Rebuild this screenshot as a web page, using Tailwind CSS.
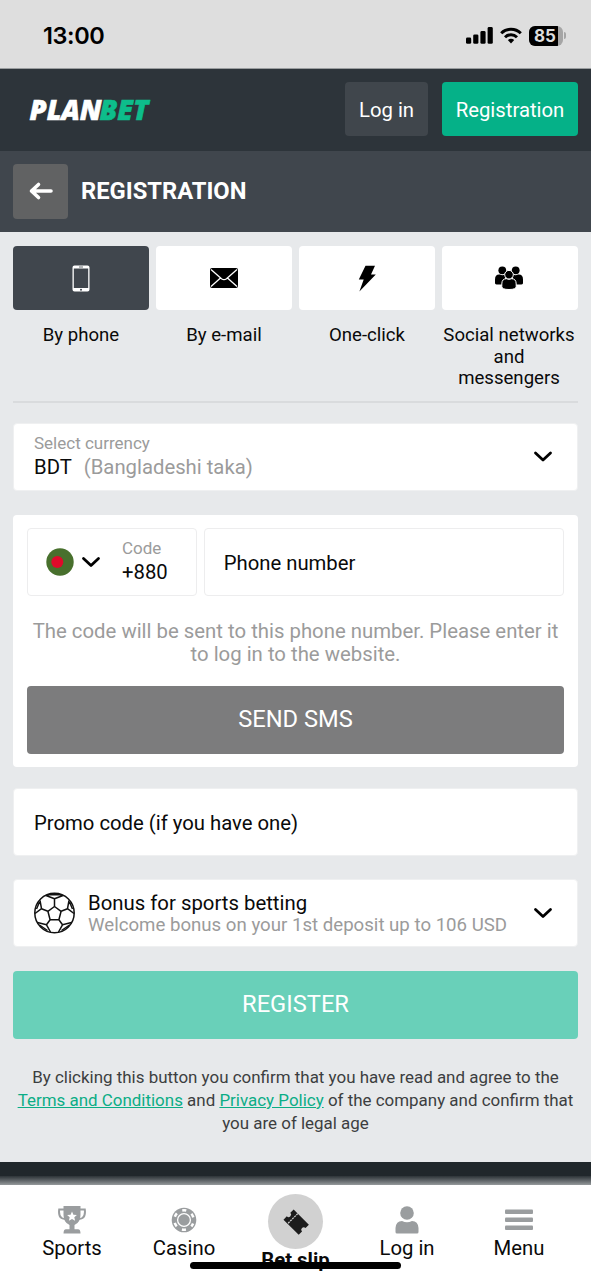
<!DOCTYPE html>
<html lang="en">
<head>
<meta charset="utf-8">
<title>Registration</title>
<script src="https://cdn.jsdelivr.net/npm/@tailwindcss/browser@4"></script>
</head>
<body class="h-[1280px] w-[591px] overflow-hidden bg-[#e7e9eb] font-['Roboto',sans-serif] text-[#0a0a0a]">
<div class="relative flex h-[1280px] flex-col overflow-hidden">
  <!-- Status bar -->
  <div class="flex h-[69px] shrink-0 items-start justify-between border-b border-[#9a9d9f] bg-[#dedede] pt-[21px] pr-[25px] pl-[43px] text-black">
    <span class="font-['Inter',sans-serif] text-[23.500px] leading-[30px] font-semibold tracking-[-0.4px]">13:00</span>
    <div class="flex h-[29px] items-center">
      <svg class="mr-[7px]" width="27" height="17" viewBox="0 0 27 17"><rect x="0" y="10.5" width="5.2" height="6.3" rx="1.4"/><rect x="7.2" y="7.4" width="5.2" height="9.4" rx="1.4"/><rect x="14.4" y="4" width="5.2" height="12.8" rx="1.4"/><rect x="21.6" y="0" width="5.2" height="16.8" rx="1.4"/></svg>
      <svg class="mr-[7px]" width="22" height="17" viewBox="0 0 22 17" fill="none" stroke="#000" stroke-width="3"><path d="M1.200 6.200a14 14 0 0 1 19.600 0"/><path d="M5 10.200a8.600 8.600 0 0 1 12 0"/><path d="M7.800 13.100a4.600 4.600 0 0 1 6.400 0L11 16.500z" fill="#000" stroke="none"/></svg>
      <div class="flex h-[20px] w-[34px] items-center overflow-hidden rounded-[6px] bg-[#a5a5a5]"><div class="h-[20px] w-[29px] bg-black pl-[5px] font-['Inter',sans-serif] text-[17px] leading-[20px] font-bold text-[#dedede]">85</div></div>
      <div class="ml-[1px] h-[7px] w-[2px] rounded-r-full bg-[#a5a5a5]"></div>
    </div>
  </div>
  <!-- Site header -->
  <header class="flex h-[82px] shrink-0 items-center bg-[#2d343a] pr-[13px] pl-[27px]">
    <svg class="overflow-visible" width="126" height="40" viewBox="-2 -6 126 40" font-family="Open Sans, sans-serif" font-size="27.500" font-weight="800" font-style="italic" stroke-width=".6"><text x="0.500" y="23.500" fill="#fff" stroke="#fff" textLength="72" lengthAdjust="spacingAndGlyphs">PLAN</text><text x="70.500" y="23.500" fill="#0dbd8b" stroke="#0dbd8b" textLength="49" lengthAdjust="spacingAndGlyphs">BET</text></svg>
    <div class="mb-[2px] ml-auto flex gap-[14px] text-[20.300px] text-white">
      <div class="flex h-[54px] w-[83px] items-center justify-center rounded bg-[#40464c] pt-[2px]">Log in</div>
      <div class="flex h-[54px] w-[136px] items-center justify-center rounded bg-[#05b188] pt-[2px]">Registration</div>
    </div>
  </header>
  <!-- Page title -->
  <div class="flex h-[81px] shrink-0 items-center bg-[#40464d] pl-[13px]">
    <div class="flex size-[55px] items-center justify-center rounded bg-[#616263]"><svg class="mb-[2px]" width="26" height="20" viewBox="0 0 26 20" fill="none" stroke="#fff" stroke-width="3.600" stroke-linecap="round" stroke-linejoin="round"><path d="M23 10H3.500M10.500 3.500L3.500 10l7 6.500"/></svg></div>
    <h1 class="ml-[13px] text-[23px] font-bold text-white"><svg class="block" width="168" height="30"><text x="0" y="22" fill="#fff" textLength="165.500" lengthAdjust="spacingAndGlyphs">REGISTRATION</text></svg></h1>
  </div>
  <!-- Method tabs -->
  <div class="mx-[13px] flex h-[171px] shrink-0 gap-[7px] border-b-2 border-[#d9dbdd] pt-[14px] text-center text-[18.600px] leading-[21.500px]">
    <div class="w-[136px]"><div class="mb-[15px] flex h-[64px] items-center justify-center rounded bg-[#40464d]"><svg width="18" height="27" viewBox="0 0 18 27"><path fill="#fff" fill-rule="evenodd" d="M2.500.5h13A2 2 0 0 1 17.500 2.500v22a2 2 0 0 1-2 2h-13a2 2 0 0 1-2-2v-22a2 2 0 0 1 2-2zM1.800 3.500v19.500h14.400V3.500z"/><circle cx="9" cy="24.700" r="1" fill="#40464d"/><path d="M7 2h4" stroke="#40464d" stroke-width=".8"/></svg></div>By phone</div>
    <div class="w-[136px]"><div class="mb-[15px] flex h-[64px] items-center justify-center rounded bg-white"><svg width="28" height="20" viewBox="0 0 28 20"><rect width="28" height="20" rx="2"/><path d="M1 1.500l10.500 9.200q2.500 2 5 0L27 1.500M1 18.500l9.500-8.500M27 18.500L17.500 10" fill="none" stroke="#fff" stroke-width="1.300"/></svg></div>By e-mail</div>
    <div class="w-[136px]"><div class="mb-[15px] flex h-[64px] items-center justify-center rounded bg-white"><svg width="18" height="27" viewBox="0 0 18 27"><path d="M7.500.8h9.500l-4 8.800h4.800L1.400 26.500l4.300-12H.8z"/></svg></div>One-click</div>
    <div class="w-[136px]"><div class="mb-[15px] flex h-[64px] items-center justify-center rounded bg-white"><svg class="mr-[2px]" width="28" height="24" viewBox="0 0 28 24"><circle cx="7.300" cy="4.300" r="3.900"/><circle cx="20.700" cy="4.300" r="3.900"/><path d="M0 17v-3.500Q0 8 5 8.500q2.500 1.300 5 0v10H3Q0 18.500 0 17zM28 17v-3.500Q28 8 23 8.500q-2.500 1.300-5 0v10h7q3 0 3-1.500z"/><g stroke="#fff" stroke-width="1"><path d="M6.800 20.500V18q0-5.500 5-5.300 2.200 1 4.400 0 5-.2 5 5.300v2.500q0 3-7.200 3t-7.200-3z"/><circle cx="14" cy="8.700" r="4.300"/></g></svg></div><span class="-mr-1 -ml-[6px] block">Social networks<br>and<br>messengers</span></div>
  </div>
  <!-- Form -->
  <main class="flex flex-col px-[13px] pt-[20px]">
    <div class="flex h-[68px] items-center justify-between rounded border border-[#eff0f1] bg-white pr-[24px] pl-[20px]">
      <div><div class="text-[17px] leading-[19px] text-[#9b9b9b]">Select currency</div><div class="pt-px text-[20.300px] leading-[26px]">BDT<span class="ml-[12px] text-[#9b9b9b]">(Bangladeshi taka)</span></div></div>
      <svg width="20" height="14" viewBox="0 0 20 14" fill="none" stroke="#000" stroke-width="2.800" stroke-linecap="round" stroke-linejoin="round"><path d="M2.500 3L10 10l7.500-7"/></svg>
    </div>
    <section class="mt-[24px] h-[252px] rounded bg-white px-[14px] pt-[13px]">
      <div class="flex gap-[7px]">
        <div class="flex h-[68px] w-[170px] items-center rounded border border-[#ededee] pl-[18px]">
          <svg width="28" height="28" viewBox="0 0 28 28"><circle cx="14" cy="14" r="13.700" fill="#48702d"/><circle cx="11.300" cy="14" r="6" fill="#df0a2a"/></svg>
          <svg class="ml-[7px]" width="20" height="14" viewBox="0 0 20 14" fill="none" stroke="#000" stroke-width="2.800" stroke-linecap="round" stroke-linejoin="round"><path d="M2.500 3.500L10 10.500l7.500-7"/></svg>
          <div class="mb-px ml-[21px]"><div class="text-[17px] leading-[21px] text-[#9b9b9b]">Code</div><div class="text-[20.300px] leading-[26px]">+880</div></div>
        </div>
        <div class="flex h-[68px] w-[361px] items-center rounded border border-[#ededee] pt-[3px] pl-[19px] text-[20.300px]">Phone number</div>
      </div>
      <p class="-mx-3 mt-[24px] h-[66px] text-center text-[20.350px] leading-[23px] whitespace-nowrap text-[#9b9b9b]">The code will be sent to this phone number. Please enter it<br>to log in to the website.</p>
      <div class="flex h-[68px] items-center justify-center rounded bg-[#7c7c7d] text-[23.700px] text-white">SEND SMS</div>
    </section>
    <div class="mt-[21px] flex h-[68px] items-center rounded border border-[#eff0f1] bg-white pt-[2px] pl-[20px] text-[20.300px]">Promo code (if you have one)</div>
    <div class="mt-[23px] flex h-[68px] items-center rounded border border-[#eff0f1] bg-white pr-[24px] pl-[20px]">
      <svg width="41" height="42" viewBox="0 0 41 42" fill="none" stroke="#111" stroke-width="1.500" stroke-linejoin="round"><circle cx="20.500" cy="21" r="19.700"/><path d="M20.500 14.500l6.600 4.800-2.200 8.500h-8.800l-2.200-8.500zM20.500 14.500V6.800M27.100 19.300l6.400-2.600M24.900 27.800l3.600 5M16.100 27.800l-3.600 5M13.900 19.300L7.500 16.700M12 3.500L20.500 6.800 29 3.500M35 8.500L33.500 16.700 40 21.500M1 21.500l6.500-4.800L6 8.500M3.500 30.500l9 2.300 4 7.200M37.500 30.500l-9 2.300-4 7.200M5.500 33l8 5.500M35.500 33l-8 5.500M2.500 17l3-7M38.500 17l-3-7M13.500 2.800h14"/></svg>
      <div class="ml-[13px] flex-1 pt-[2px] whitespace-nowrap"><div class="text-[20.350px] leading-[23px]">Bonus for sports betting</div><div class="text-[18.650px] leading-[21px] text-[#9b9b9b]">Welcome bonus on your 1st deposit up to 106 USD</div></div>
      <svg width="20" height="14" viewBox="0 0 20 14" fill="none" stroke="#000" stroke-width="2.800" stroke-linecap="round" stroke-linejoin="round"><path d="M2.500 3.500L10 10.500l7.500-7"/></svg>
    </div>
    <div class="mt-[24px] flex h-[68px] items-center justify-center rounded bg-[#69d0b9] text-[23.700px] text-white">REGISTER</div>
    <p class="-mx-2 mt-[27px] text-center text-[16.950px] leading-[23px] whitespace-nowrap text-[#3c3e40]">By clicking this button you confirm that you have read and agree to the<br><span class="text-[#0bad86] underline">Terms and Conditions</span> and <span class="text-[#0bad86] underline">Privacy Policy</span> of the company and confirm that<br>you are of legal age</p>
  </main>
  <!-- Footer strip and bottom navigation -->
  <div class="mt-auto h-[23px] shrink-0 bg-[#20272b] pt-[14px]"><div class="h-[9px] bg-linear-to-b from-[#2d3438] to-[#969a9c]"></div></div>
  <nav class="grid h-[95px] shrink-0 grid-cols-[128px_96px_127px_96px_128px] bg-white pl-[8px] text-center text-[20.300px] leading-[24px]">
    <div class="flex flex-col items-center pt-[21px]"><svg width="28" height="28" viewBox="0 0 28 28" fill="#9a9d9f"><path d="M5.500 0h17v9q0 7.500-6 10v4.200h3.500q2.500 0 2.500 4.300h-17q0-4.300 2.500-4.300h3.500V19q-6-2.500-6-10z"/><path d="M6.500 3.500H1.200q-.8 6.500 2.300 8.500 1.500 1 4 1M21.500 3.500h5.300q.8 6.500-2.300 8.500-1.500 1-4 1" fill="none" stroke="#9a9d9f" stroke-width="2"/><path fill="#fff" d="M14 5.500l1.400 3.200 3.500.3-2.600 2.300.8 3.500-3.100-1.900-3.100 1.900.8-3.500L9.100 9l3.500-.3z"/></svg><span class="mt-[2px]">Sports</span></div>
    <div class="flex flex-col items-center pt-[21px]"><svg width="28" height="28" viewBox="0 0 28 28"><circle cx="14" cy="14" r="12.300" fill="#9a9d9f"/><circle cx="14" cy="14" r="9.700" fill="none" stroke="#fff" stroke-width="2.500" stroke-dasharray="4 6.158" stroke-dashoffset="2" transform="rotate(30 14 14)"/><circle cx="14" cy="14" r="6.400" fill="none" stroke="#fff" stroke-width="1.300"/></svg><span class="mt-[2px]">Casino</span></div>
    <div class="flex flex-col items-center pt-[9px]"><div class="flex size-[55px] shrink-0 items-center justify-center rounded-full bg-[#d1d1d1]"><svg width="28" height="28" viewBox="0 0 28 28"><g transform="rotate(45 14 14)"><path fill="#1c1c1c" d="M3.500 6.800h21.500v4.700a2.500 2.500 0 0 0 0 5v4.700H3.500v-4.700a2.500 2.500 0 0 0 0-5z"/><path d="M9.300 6.800v14.400" stroke="#d1d1d1" stroke-width="1.200" stroke-dasharray="2 .9"/></g></svg></div><span class="-mt-px text-[20.300px] font-bold">Bet slip</span></div>
    <div class="flex flex-col items-center pt-[21px]"><svg width="28" height="28" viewBox="0 0 28 28" fill="#9a9d9f"><circle cx="14" cy="7" r="6.800"/><path d="M2.500 26v-4Q3 15 9 15q5 2.500 10 0 6 0 6.500 7v4q0 1.500-1.500 1.500H4q-1.500 0-1.500-1.500z"/></svg><span class="mt-[2px]">Log in</span></div>
    <div class="flex flex-col items-center pt-[21px]"><svg width="28" height="28" viewBox="0 0 28 28" fill="#9a9d9f"><rect y="3.500" width="28" height="4.500" rx="1"/><rect y="11.500" width="28" height="4.500" rx="1"/><rect y="19.500" width="28" height="4.500" rx="1"/></svg><span class="mt-[2px]">Menu</span></div>
  </nav>
  <div class="absolute top-[1261.5px] left-[190px] h-[7px] w-[211px] rounded-full bg-black"></div>
</div>
</body>
</html>
